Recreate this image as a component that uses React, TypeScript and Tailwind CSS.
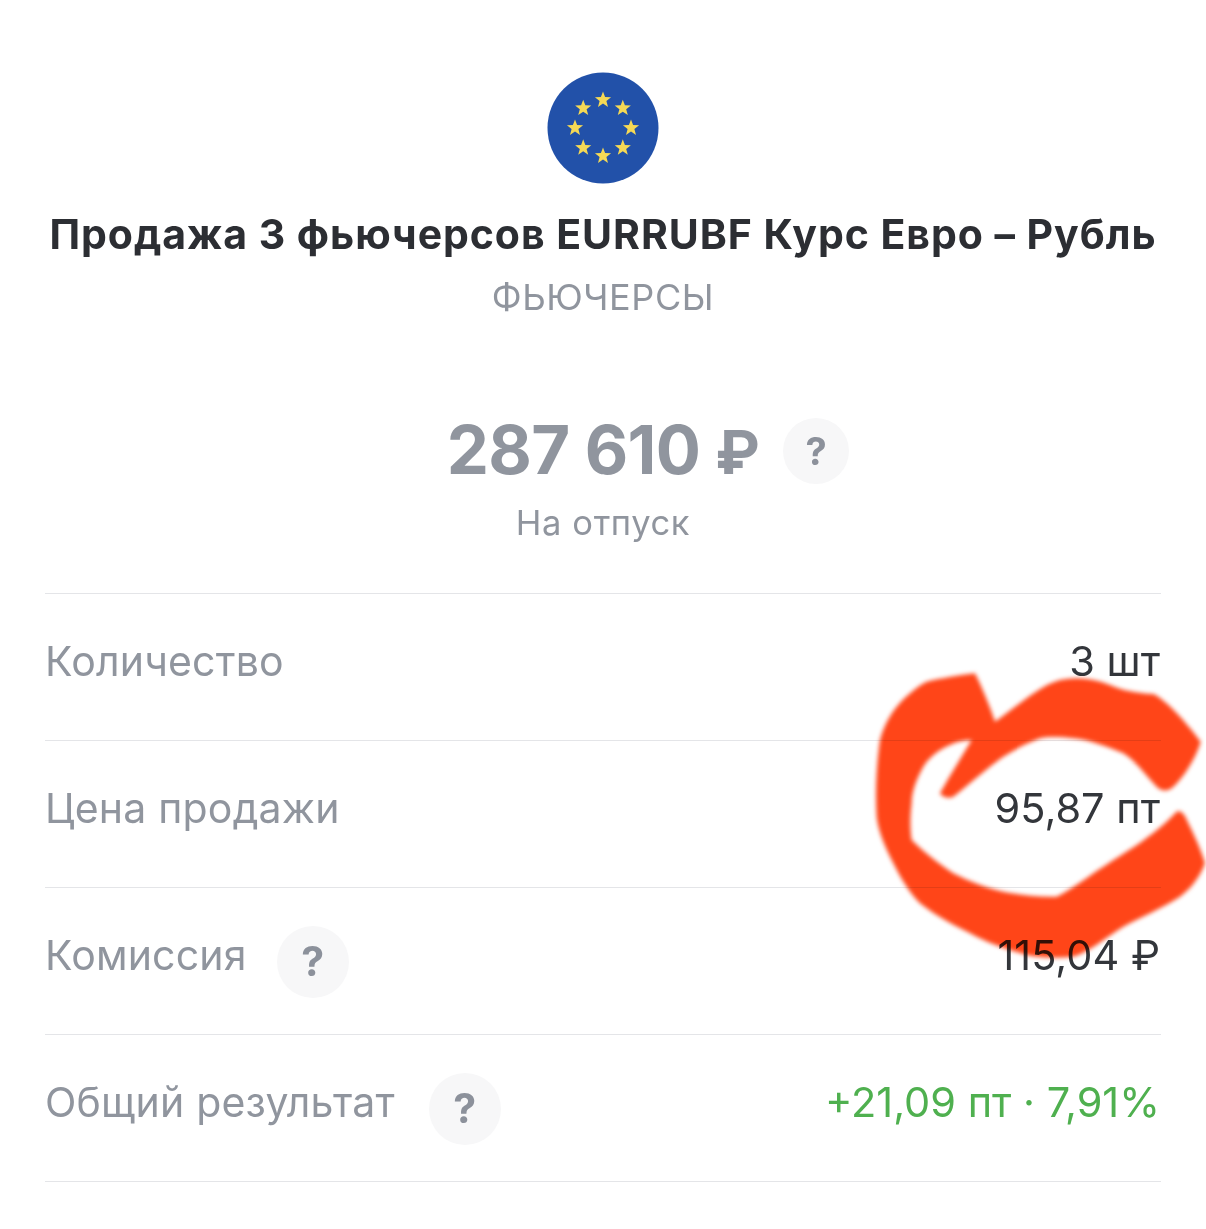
import React from 'react';

const starPath = (cx: number, cy: number, r: number) => {
  const pts: string[] = [];
  for (let i = 0; i < 10; i++) {
    const rad = i % 2 === 0 ? r : r * 0.42;
    const a = (Math.PI / 5) * i - Math.PI / 2;
    pts.push(`${(cx + rad * Math.cos(a)).toFixed(2)},${(cy + rad * Math.sin(a)).toFixed(2)}`);
  }
  return pts.join(' ');
};

const EuFlag = () => (
  <svg width="112" height="112" viewBox="0 0 112 112">
    <circle cx="56" cy="56" r="55.5" fill="#2251a9" />
    {Array.from({ length: 8 }).map((_, i) => {
      const a = (Math.PI / 4) * i - Math.PI / 2;
      return <polygon key={i} points={starPath(56 + 28 * Math.cos(a), 56 + 28 * Math.sin(a), 8.5)} fill="#f5d955" />;
    })}
  </svg>
);

const HelpButton = ({ size }: { size: 'sm' | 'lg' }) => (
  <span
    className={
      size === 'sm'
        ? 'flex h-[66px] w-[66px] items-center justify-center rounded-full bg-[#f7f7f8] text-[38px] font-bold text-[#8c919b]'
        : 'flex h-[72px] w-[72px] items-center justify-center rounded-full bg-[#f7f7f8] text-[41px] font-bold text-[#8c919b]'
    }
  >
    ?
  </span>
);

const Row = ({
  label,
  value,
  help,
  gap,
  green,
}: {
  label: string;
  value: string;
  help?: boolean;
  gap?: string;
  green?: boolean;
}) => (
  <div className="flex h-[147px] items-start justify-between border-b border-[#e4e5e8]">
    <div className={`flex items-start ${gap ?? ''}`}>
      <span className="mt-[39px] text-[41px] leading-[56px] tracking-[0.2px] text-[#90959e]">{label}</span>
      {help && (
        <span className="mt-[38px]">
          <HelpButton size="lg" />
        </span>
      )}
    </div>
    <span className={`mt-[39px] pr-px text-[41.5px] leading-[56px] ${green ? 'text-[#4fb04f]' : 'text-[#33363b]'}`}>
      {value}
    </span>
  </div>
);

const Scribble = () => (
  <svg
    className="pointer-events-none absolute left-[860px] top-[650px] mix-blend-multiply blur-[2px]"
    width="346"
    height="340"
    viewBox="0 0 1038 1020"
  >
    <path
      fill="#ff4518"
      d="M345 70 C365 110 390 170 405 215 C470 170 540 105 600 90 C650 80 700 85 750 105 C790 122 830 130 880 132 C920 150 985 225 1022 275 C1010 320 970 385 940 410 C925 425 905 425 890 410 C860 380 830 335 790 310 C740 290 690 270 640 265 C600 260 560 260 540 265 C500 280 465 298 430 320 C380 355 325 405 280 440 C265 448 245 440 240 430 C265 385 305 320 335 270 C315 270 290 275 270 285 C235 300 205 325 190 350 C165 395 155 430 155 460 C150 500 150 540 155 570 C190 605 235 640 280 670 C330 695 380 715 430 725 C480 735 540 742 590 740 C640 715 690 675 730 650 C790 610 880 560 950 485 C965 480 975 495 985 520 C1005 560 1025 605 1035 640 C1020 680 995 715 960 740 C905 775 845 800 790 830 C740 860 690 905 640 920 C590 925 545 925 500 915 C450 900 400 885 350 860 C290 830 230 800 180 760 C145 725 120 680 100 640 C75 590 55 545 50 500 C45 420 50 340 60 270 C70 230 90 195 110 170 C135 140 170 110 200 95 C245 85 300 75 345 70 Z"
    />
  </svg>
);

export default function App() {
  return (
    <div className="relative h-[1229px] w-[1206px] overflow-hidden bg-white font-['Inter','Noto_Sans',sans-serif]">
      <div className="flex flex-col items-center pt-[72px]">
        <EuFlag />
        <h1 className="mt-[22px] whitespace-nowrap text-[41px] font-bold leading-[56px] tracking-[0.95px] text-[#2c2e33]">
          Продажа 3 фьючерсов EURRUBF Курс Евро – Рубль
        </h1>
        <div className="mt-[10px] text-[36px] leading-[50px] tracking-[0.6px] text-[#90959e]">ФЬЮЧЕРСЫ</div>
        <div className="relative mt-[96px] flex h-[66px] items-center">
          <span className="text-[67px] font-bold leading-[66px] tracking-[-0.7px] text-[#90959e]">
            287 610 <span className="text-[60px]">₽</span>
          </span>
          <span className="absolute left-[calc(100%+24px)] top-0">
            <HelpButton size="sm" />
          </span>
        </div>
        <div className="mt-[15px] text-[34.5px] leading-[48px] tracking-[0.6px] text-[#90959e]">На отпуск</div>
      </div>
      <div className="mx-[45px] mt-[46px] border-t border-[#e4e5e8]">
        <Row label="Количество" value="3 шт" />
        <Row label="Цена продажи" value="95,87 пт" />
        <Row label="Комиссия" value="115,04 ₽" help gap="gap-[30px]" />
        <Row label="Общий результат" value="+21,09 пт · 7,91%" help gap="gap-[34px]" green />
      </div>
      <Scribble />
    </div>
  );
}
